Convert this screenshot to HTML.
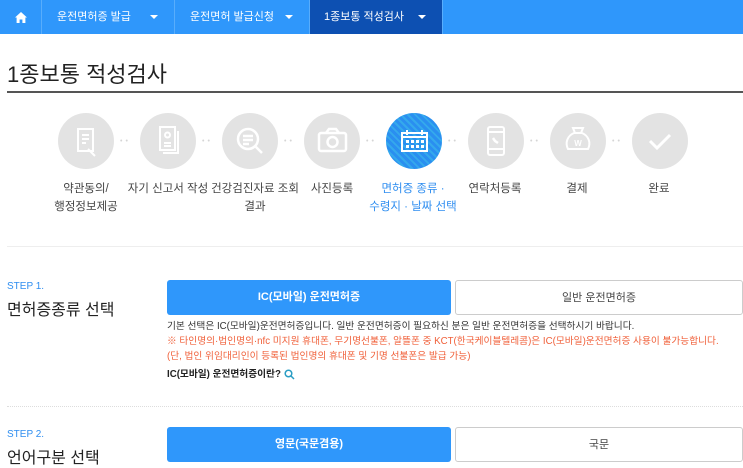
<!DOCTYPE html>
<html><head><meta charset="utf-8"><style>
*{margin:0;padding:0;box-sizing:border-box}
body{width:743px;height:466px;overflow:hidden;background:#fff;font-family:"Liberation Sans","Noto Sans CJK KR",sans-serif;position:relative;color:#222}
.nav{position:absolute;left:0;top:0;width:743px;height:34px;background:#2f97fb}
.nav div{position:absolute;top:0;height:34px;line-height:34px;color:#fff;font-size:11px;border-right:1px solid #58adfc}
.nav .car{position:absolute;right:16px;top:15px;width:0;height:0;border-left:4px solid transparent;border-right:4px solid transparent;border-top:4px solid #fff}
.a{position:absolute}
.c{position:absolute;top:113px;width:56px;height:56px;border-radius:50%;background:#e3e3e3}
.dots{position:absolute;top:138px;font-size:7px;color:#d5d5d5;letter-spacing:3px}
.lbl{position:absolute;top:180px;width:90px;text-align:center;font-size:11.5px;line-height:18px;color:#444}
.btn{position:absolute;height:35px;line-height:35px;text-align:center;font-size:11px;border-radius:3px}
.b1{background:#2f97fb;color:#fff;font-weight:bold}
.b2{border:1px solid #ccc;color:#444;background:#fff}
.t{position:absolute;left:167px;font-size:9.7px;white-space:nowrap}
</style></head><body>
<div class="nav">
<div style="left:0;width:42px;text-align:center"><svg width="12" height="11" viewBox="0 0 12 11" style="vertical-align:middle"><path d="M6 0L0 5.5h1.6V11h3V7.5h2.8V11h3V5.5H12z" fill="#fff"/></svg></div>
<div style="left:42px;width:133px;padding-left:15px">운전면허증 발급<span class="car"></span></div>
<div style="left:175px;width:135px;padding-left:15px">운전면허 발급신청<span class="car"></span></div>
<div style="left:310px;width:133px;padding-left:14px;background:#0d50b2">1종보통 적성검사<span class="car"></span></div>
</div>
<div class="a" style="left:7px;top:57px;font-size:22px;color:#222">1종보통 적성검사</div>
<div class="a" style="left:7px;top:91px;width:736px;height:2px;background:#555"></div>

<div class="c" style="left:58px"><svg width="56" height="56"><g fill="none" stroke="#fff" stroke-width="2"><rect x="20" y="16" width="15" height="22"/><path d="M24 22h7M24 26h7M24 30h4M30 36l7 7"/></g></svg></div>
<div class="c" style="left:140px"><svg width="56" height="56"><g fill="none" stroke="#fff" stroke-width="2"><rect x="20" y="14" width="15" height="23"/><path d="M23 40h15V18M24 30h7M24 33h7"/><circle cx="27.5" cy="22" r="2.5"/></g></svg></div>
<div class="c" style="left:222px"><svg width="56" height="56"><g fill="none" stroke="#fff" stroke-width="2.5"><circle cx="26" cy="26" r="10"/><path d="M33 33l7 7M21 23h10M21 27h10M21 31h6"/></g></svg></div>
<div class="c" style="left:304px"><svg width="56" height="56"><g fill="none" stroke="#fff" stroke-width="2.5"><rect x="15" y="20" width="27" height="18" rx="2"/><path d="M22 20l3-4h7l3 4"/><circle cx="28.5" cy="29" r="5"/></g></svg></div>
<div class="c" style="left:386px;background:repeating-linear-gradient(45deg,#2a8ff0 0 3px,#34a9ec 3px 5px)"><svg width="56" height="56"><g fill="none" stroke="#fff" stroke-width="2"><rect x="16" y="20" width="25" height="18"/><path d="M16 24h25M21 17v5M36 17v5"/></g><g fill="#fff"><rect x="20" y="27" width="3" height="3"/><rect x="25" y="27" width="3" height="3"/><rect x="30" y="27" width="3" height="3"/><rect x="35" y="27" width="3" height="3"/><rect x="20" y="32" width="3" height="3"/><rect x="25" y="32" width="3" height="3"/><rect x="30" y="32" width="3" height="3"/><rect x="35" y="32" width="3" height="3"/></g></svg></div>
<div class="c" style="left:468px"><svg width="56" height="56"><g fill="none" stroke="#fff" stroke-width="2"><rect x="20" y="14" width="16" height="28" rx="2"/><path d="M20 19h16M20 36h16"/><path d="M25 25l2 3 3 2" stroke-width="2.5"/></g></svg></div>
<div class="c" style="left:550px"><svg width="56" height="56"><g fill="none" stroke="#fff" stroke-width="2"><path d="M23 15h10l-2 5h-6z"/><path d="M24 20c-7 3-9 10-6 16h20c3-6 1-13-6-16z"/></g><text x="28" y="33" font-size="8" font-weight="bold" fill="#fff" text-anchor="middle" font-family="Liberation Sans">W</text></svg></div>
<div class="c" style="left:632px"><svg width="56" height="56"><path d="M18 28l7 7 13-13" fill="none" stroke="#fff" stroke-width="3"/></svg></div>
<div class="dots" style="left:120px">••</div><div class="dots" style="left:202px">••</div><div class="dots" style="left:284px">••</div><div class="dots" style="left:366px">••</div><div class="dots" style="left:448px">••</div><div class="dots" style="left:530px">••</div><div class="dots" style="left:612px">••</div>
<div class="lbl" style="left:41px">약관동의/<br>행정정보제공</div>
<div class="lbl" style="width:100px;left:118px">자기 신고서 작성</div>
<div class="lbl" style="left:205px;width:100px">건강검진자료 조회<br>결과</div>
<div class="lbl" style="left:287px">사진등록</div>
<div class="lbl" style="left:368px;color:#2f8ef0">면허증 종류 ·<br>수령지 · 날짜 선택</div>
<div class="lbl" style="left:450px">연락처등록</div>
<div class="lbl" style="left:532px">결제</div>
<div class="lbl" style="left:614px">완료</div>

<div class="a" style="left:7px;top:246px;width:736px;height:1px;background:#eee"></div>
<div class="a" style="left:7px;top:281px;font-size:10px;color:#2f8ef0">STEP 1.</div>
<div class="a" style="left:7px;top:296px;font-size:16px">면허증종류 선택</div>
<div class="btn b1" style="left:167px;top:280px;width:284px">IC(모바일) 운전면허증</div>
<div class="btn b2" style="left:455px;top:280px;width:288px">일반 운전면허증</div>
<div class="t" style="top:318px;color:#333">기본 선택은 IC(모바일)운전면허증입니다. 일반 운전면허증이 필요하신 분은 일반 운전면허증을 선택하시기 바랍니다.</div>
<div class="t" style="top:333px;color:#f0603a">※ 타인명의·법인명의·nfc 미지원 휴대폰, 무기명선불폰, 알뜰폰 중 KCT(한국케이블텔레콤)은 IC(모바일)운전면허증 사용이 불가능합니다.</div>
<div class="t" style="top:348px;color:#f0603a">(단, 법인 위임대리인이 등록된 법인명의 휴대폰 및 기명 선불폰은 발급 가능)</div>
<div class="t" style="top:366px;font-weight:bold;color:#222">IC(모바일) 운전면허증이란? <svg width="11" height="11" style="vertical-align:middle"><circle cx="4.5" cy="4.5" r="3.3" fill="none" stroke="#2a9dc4" stroke-width="1.5"/><path d="M7 7l3 3" stroke="#2a9dc4" stroke-width="1.5"/></svg></div>
<div class="a" style="left:7px;top:406px;width:736px;border-top:1px dotted #ddd"></div>
<div class="a" style="left:7px;top:429px;font-size:10px;color:#2f8ef0">STEP 2.</div>
<div class="a" style="left:7px;top:444px;font-size:16px">언어구분 선택</div>
<div class="btn b1" style="left:167px;top:427px;width:284px">영문(국문겸용)</div>
<div class="btn b2" style="left:455px;top:427px;width:288px">국문</div>
</body></html>
